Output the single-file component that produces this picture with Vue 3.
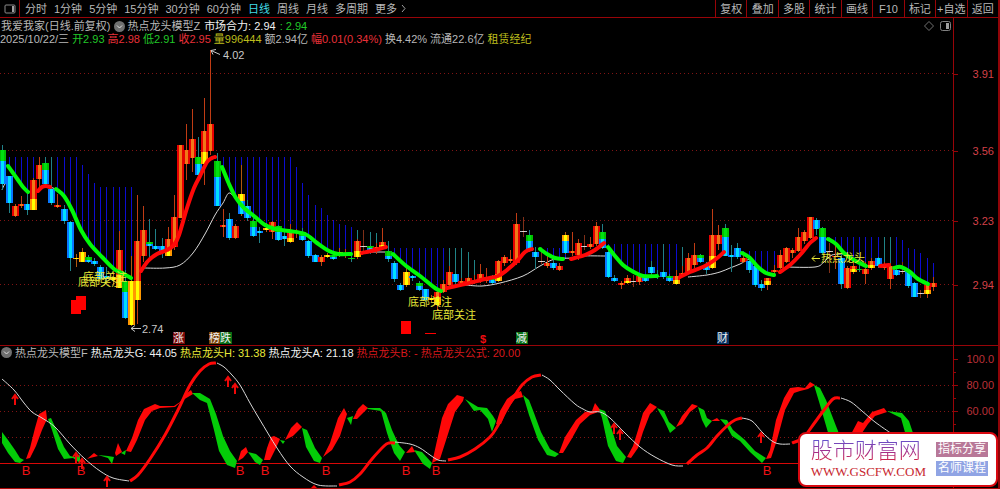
<script setup>
const periods = ['分时', '1分钟', '5分钟', '15分钟', '30分钟', '60分钟', '日线', '周线', '月线', '多周期', '更多']
const tools = ['复权', '叠加', '多股', '统计', '画线', 'F10', '标记', '+自选', '返回']

const quote = [
  { label: '2025/10/22/三', tone: 'plain' },
  { label: '开2.93', tone: 'down' },
  { label: '高2.98', tone: 'up' },
  { label: '低2.91', tone: 'down' },
  { label: '收2.95', tone: 'up' },
  { label: '量996444', tone: 'gold' },
  { label: '额2.94亿', tone: 'plain' },
  { label: '幅0.01(0.34%)', tone: 'up' },
  { label: '换4.42%', tone: 'plain' },
  { label: '流通22.6亿', tone: 'plain' },
  { label: '租赁经纪', tone: 'gold' },
]

const priceTicks = [
  { y: 74, label: '3.91' },
  { y: 151, label: '3.56' },
  { y: 221, label: '3.23' },
  { y: 285, label: '2.94' },
]
const indexTicks = [
  { y: 359, label: '100.0' },
  { y: 385, label: '80.00' },
  { y: 411, label: '60.00' },
  { y: 437, label: '40.00' },
]
const minorTicks = [372, 398, 424]
const priceTop = (y) => ({ top: ((y - 18) / 327) * 100 + '%' })
const indexTop = (y) => ({ top: ((y - 346) / 142) * 100 + '%' })

const step = 6.12
const xAt = (i) => Math.round(2.4 + step * i)

// high, top, bottom, low, upper colour, [split, lower colour]
const rows = [
  [145, 150, 184, 190, 'g', 161, 'c'], [176, 176, 203, 213, 'c'], [204, 206, 216, 217, 'r'], [196, 204, 206, 208, 'r'],
  [194, 204, 210, 215, 'c'], [178, 180, 210, 210, 'r', 199, 'y'], [157, 165, 179, 190, 'r'], [157, 163, 184, 186, 'g', 170, 'c'],
  [157, 189, 203, 205, 'c'], [194, 205, 207, 208, 'r'], [205, 209, 221, 224, 'c'], [221, 222, 258, 271, 'c'],
  [254, 258, 259, 267, 'y'], [248, 252, 262, 262, 'y'], [255, 257, 262, 263, 'g', 260, 'c'], [258, 261, 264, 266, 'c'],
  [265, 267, 279, 280, 'c'], [267, 276, 279, 281, 'c'], [272, 277, 280, 284, 'y'], [231, 250, 288, 288, 'r', 275, 'y'],
  [270, 281, 318, 319, 'g', 292, 'c'], [256, 281, 325, 326, 'y'], [195, 241, 300, 324, 'r', 281, 'y'], [206, 230, 256, 262, 'r'],
  [219, 242, 246, 259, 'g', 244, 'c'], [229, 246, 249, 250, 'c'], [238, 246, 253, 258, 'c'], [227, 239, 256, 256, 'r', 249, 'y'],
  [195, 217, 247, 250, 'r'], [145, 145, 218, 218, 'r'], [124, 150, 164, 180, 'r'], [109, 139, 158, 172, 'r'],
  [137, 157, 175, 177, 'g', 164, 'c'], [98, 131, 164, 185, 'r', 152, 'y'], [50, 124, 151, 155, 'r'], [153, 161, 206, 206, 'g', 177, 'c'],
  [209, 225, 227, 237, 'r'], [213, 219, 238, 240, 'c'], [224, 226, 238, 239, 'r'], [165, 194, 214, 216, 'y', 201, 'c'],
  [200, 206, 218, 221, 'c'], [218, 221, 236, 237, 'g', 227, 'c'], [227, 231, 233, 243, 'c'], [223, 228, 230, 232, 'y'],
  [221, 222, 232, 239, 'r'], [225, 226, 240, 241, 'g', 232, 'c'], [231, 236, 239, 246, 'c'], [224, 230, 242, 243, 'r', 238, 'y'],
  [229, 231, 233, 238, 'r'], [228, 232, 240, 241, 'g', 236, 'c'], [240, 241, 256, 258, 'c'], [254, 255, 262, 262, 'c'],
  [255, 257, 262, 266, 'r'], [253, 255, 257, 258, 'y'], [252, 255, 259, 260, 'g', 257, 'c'], [248, 252, 255, 257, 'y'],
  [249, 254, 255, 258, 'r'], [252, 258, 259, 262, 'g'], [239, 241, 257, 259, 'r', 251, 'y'], [230, 246, 247, 252, 'w'],
  [241, 246, 251, 254, 'g', 248, 'c'], [243, 247, 250, 254, 'r'], [228, 242, 247, 249, 'r', 245, 'y'], [241, 251, 259, 262, 'g', 256, 'c'],
  [261, 263, 279, 282, 'c'], [283, 285, 290, 291, 'c'], [266, 272, 285, 287, 'y'], [275, 276, 278, 281, 'c'],
  [281, 283, 290, 291, 'g', 286, 'c'], [289, 289, 300, 302, 'c'], [295, 298, 300, 302, 'y'], [289, 292, 305, 311, 'r', 297, 'y'],
  [280, 284, 292, 293, 'r'], [266, 272, 285, 286, 'r'], [270, 274, 282, 284, 'c'], [278, 281, 283, 285, 'r'],
  [277, 278, 282, 284, 'r'], [275, 280, 281, 284, 'r'], [264, 274, 281, 283, 'r'], [268, 277, 281, 283, 'r'],
  [275, 277, 283, 284, 'g', 280, 'c'], [260, 261, 281, 282, 'r', 274, 'y'], [255, 257, 263, 266, 'r'], [250, 259, 261, 263, 'r'],
  [213, 224, 263, 265, 'r'], [217, 231, 232, 237, 'w'], [230, 235, 251, 252, 'g', 241, 'c'], [247, 252, 257, 269, 'c'],
  [249, 261, 262, 264, 'w'], [255, 263, 266, 268, 'r'], [256, 263, 268, 270, 'c'], [263, 266, 270, 271, 'r'],
  [232, 235, 253, 254, 'y', 241, 'c'], [232, 251, 253, 256, 'r'], [239, 243, 255, 260, 'r'], [235, 246, 247, 250, 'w'],
  [237, 244, 247, 249, 'r'], [222, 226, 244, 246, 'r'], [224, 232, 248, 249, 'g', 239, 'c'], [250, 252, 277, 278, 'c'],
  [275, 278, 281, 282, 'c'], [281, 283, 285, 289, 'r'], [275, 278, 283, 284, 'r', 281, 'y'], [275, 281, 282, 287, 'w'],
  [274, 276, 282, 285, 'r'], [274, 277, 281, 282, 'c'], [261, 267, 273, 278, 'c'], [270, 276, 277, 279, 'g'],
  [244, 272, 277, 279, 'c'], [274, 276, 281, 282, 'g', 278, 'c'], [270, 276, 284, 285, 'r', 280, 'y'], [266, 273, 275, 277, 'r'],
  [253, 258, 272, 274, 'r'], [243, 255, 265, 268, 'r'], [254, 255, 262, 263, 'g', 258, 'c'], [262, 266, 270, 274, 'c'],
  [209, 235, 268, 269, 'r', 256, 'y'], [225, 235, 244, 250, 'r'], [224, 228, 256, 256, 'g', 237, 'c'], [245, 255, 257, 272, 'c'],
  [243, 248, 257, 259, 'c'], [254, 258, 262, 263, 'r'], [260, 261, 270, 273, 'c'], [265, 266, 285, 287, 'c'],
  [280, 284, 288, 291, 'c'], [278, 278, 285, 290, 'r', 281, 'y'], [265, 270, 272, 275, 'r'], [250, 255, 268, 269, 'r'],
  [247, 248, 262, 263, 'r'], [248, 250, 253, 258, 'r'], [228, 237, 251, 252, 'r'], [230, 232, 241, 244, 'r'],
  [217, 217, 238, 239, 'r'], [218, 220, 229, 235, 'c'], [227, 228, 253, 254, 'g', 237, 'c'], [243, 251, 252, 273, 'w'],
  [246, 256, 257, 269, 'r'], [254, 258, 284, 289, 'c'], [266, 268, 288, 289, 'r'], [262, 266, 272, 274, 'r', 269, 'y'],
  [261, 269, 270, 272, 'g'], [262, 269, 274, 284, 'r'], [258, 261, 268, 270, 'r', 265, 'y'], [257, 258, 266, 268, 'c'],
  [262, 266, 268, 270, 'r'], [263, 266, 279, 289, 'r'], [266, 270, 275, 276, 'c'], [262, 271, 272, 274, 'w'],
  [270, 271, 286, 288, 'c'], [282, 283, 297, 297, 'c'], [290, 293, 294, 298, 'w'], [283, 285, 294, 298, 'r', 290, 'y'],
  [277, 283, 287, 291, 'r'],
]

const outer = { r: '#e80000', c: '#0878ff', g: '#00c000', y: '#ff9800', w: '#c0c0c0' }
const inner = { r: '#f07818', c: '#00e0ff', g: '#00e010', y: '#ffff00', w: '#d8d8d8' }
const wick = { r: '#c03c14', c: '#208088', g: '#208088', y: '#b05810', w: '#803018' }

const candles = rows.map(([high, top, bottom, low, tone, split, lower], i) => {
  const parts = split
    ? [{ y: top, h: split - top, tone }, { y: split, h: bottom - split, tone: lower }]
    : [{ y: top, h: bottom - top, tone }]
  return { x: xAt(i), high, low, tone, parts }
})

const trend = [
  { tone: 'fall', pts: [[8, 166], [13, 173], [18, 180], [23, 187], [28, 192]] },
  { tone: 'rise', pts: [[38, 191], [42, 187], [46, 186], [50, 187]] },
  { tone: 'fall', pts: [[56, 189], [64, 196], [72, 210], [81, 230], [90, 244], [102, 257], [114, 269], [124, 274], [131, 278]] },
  { tone: 'rise', pts: [[141, 271], [148, 261], [157, 254], [167, 250], [174, 245], [179, 235], [187, 208], [194, 188], [200, 176], [207, 162], [212, 158], [215, 157]] },
  { tone: 'fall', pts: [[222, 167], [229, 184], [236, 198], [244, 208], [254, 216], [265, 225], [275, 229], [289, 231], [305, 234], [317, 243], [329, 251], [338, 254], [351, 254]] },
  { tone: 'rise', pts: [[362, 253], [375, 250], [386, 247]] },
  { tone: 'fall', pts: [[393, 254], [405, 265], [420, 276], [435, 288], [441, 291]] },
  { tone: 'rise', pts: [[447, 288], [465, 284], [485, 279], [498, 276], [507, 270], [517, 261], [525, 252], [532, 249]] },
  { tone: 'fall', pts: [[540, 249], [547, 254], [555, 258], [563, 259]] },
  { tone: 'rise', pts: [[571, 259], [585, 255], [595, 250], [604, 243]] },
  { tone: 'fall', pts: [[608, 247], [615, 256], [623, 265], [632, 271], [643, 276], [657, 276]] },
  { tone: 'rise', pts: [[680, 277], [690, 272], [705, 266], [716, 259], [724, 252]] },
  { tone: 'fall', pts: [[742, 253], [750, 258], [758, 267], [766, 273], [774, 275]] },
  { tone: 'rise', pts: [[780, 272], [790, 265], [800, 255], [810, 243], [816, 238]] },
  { tone: 'fall', pts: [[828, 239], [836, 244], [844, 253], [854, 260], [866, 266]] },
  { tone: 'rise', pts: [[880, 266], [889, 265]] },
  { tone: 'fall', pts: [[894, 268], [901, 267], [910, 272], [918, 279], [928, 284]] },
]
const whites = [
  [[2, 190], [5, 184], [13, 177]], [[28, 192], [33, 191], [38, 190]], [[50, 187], [56, 189]],
  [[144, 268], [165, 268], [180, 265], [193, 253], [205, 234], [215, 215], [223, 203], [229, 193], [236, 199]],
  [[366, 252], [392, 252]],
  [[466, 285], [482, 286], [500, 283], [523, 276], [540, 266], [555, 259], [573, 258], [582, 256], [605, 256]],
  [[688, 277], [707, 275], [720, 272], [730, 268], [740, 264], [749, 259]],
  [[785, 267], [815, 267], [824, 262], [832, 255], [845, 254]],
]

const flat = trend.flatMap((s) => s.pts)
const lineY = (x) => {
  const k = flat.findIndex((p) => p[0] >= x)
  if (k < 1) return flat[k < 0 ? flat.length - 1 : 0][1]
  const [a, b] = [flat[k - 1], flat[k]]
  return a[1] + ((b[1] - a[1]) * (x - a[0])) / (b[0] - a[0])
}

// first bar index, bar tops, indexes drawn in teal
const curtains = [
  [1, [...Array(12).fill(157), 165, 174, 183, 187, 187, 187, 187, 187, 187], [6, 7, 8]],
  [35, [...Array(13).fill(157), 167, 183, 195, 205, 208, 215, 220, 224, 225, 227, 230, 231, 232, 233], [58, 59, 60, 61]],
  [63, [...Array(13).fill(248), 252, 260, 265], [73, 74, 75, 76, 77, 78]],
  [88, [248, 248, 248, 248, 248], []],
  [99, Array(12).fill(244), [108]],
  [111, [247], [111]],
  [121, Array(6).fill(251), []],
  [135, [...Array(12).fill(237), 240, 248, 249, 253, 258, 263], [144, 145]],
]
const bars = curtains.flatMap(([first, tops, teal]) =>
  tops.map((top, k) => {
    const i = first + k
    return { x: xAt(i), top, bottom: Math.max(top, Math.round(lineY(xAt(i)))), teal: teal.includes(i) }
  }),
)

const smooth = (pts) => {
  let d = `M${pts[0]}`
  for (let i = 1; i < pts.length; i++) {
    const p0 = pts[i - 2] || pts[i - 1]
    const p1 = pts[i - 1]
    const p2 = pts[i]
    const p3 = pts[i + 1] || p2
    d += `C${p1[0] + (p2[0] - p0[0]) / 6} ${p1[1] + (p2[1] - p0[1]) / 6} ${p2[0] - (p3[0] - p1[0]) / 6} ${p2[1] - (p3[1] - p1[1]) / 6} ${p2}`
  }
  return d
}

const badges = [
  { x: 173, fill: '#780808', label: '涨' },
  { x: 209, fill: '#7a4208', label: '榜' },
  { x: 220, fill: '#086c14', label: '跌' },
  { x: 516, fill: '#087014', label: '减' },
  { x: 717, fill: '#083060', label: '财' },
]
const notes = [
  { x: 83, y: 281, label: '底部关注' },
  { x: 78, y: 286, label: '底部关注' },
  { x: 408, y: 306, label: '底部关注' },
  { x: 432, y: 319, label: '底部关注' },
]

const ribbons = [
  ['fall', '2,432 8,440 15,450 20,458 24,460 20,463 15,462 8,453 2,443'],
  ['rise', '26,459 30,448 35,428 39,414 46,410 47,419 42,430 36,446 30,458'],
  ['fall', '48,419 51,418 57,431 64,447 70,456 75,457 80,455 80,463 73,458 64,459 58,449 52,430'],
  ['rise', '87,459 94,453 98,456 90,458'],
  ['fall', '98,455 108,456 114,457 112,464 108,458'],
  ['rise', '115,453 118,443 122,452 116,456'],
  ['fall', '121,453 126,450 125,455'],
  ['rise', '126,451 132,438 138,420 144,409 155,404 160,406 174,406 180,402 187,393 191,390 193,394 183,400 175,407 160,408 152,411 145,420 137,440 131,452'],
  ['fall', '192,393 200,393 210,399 216,414 223,436 230,451 237,461 235,468 227,465 219,451 214,430 207,403 200,400'],
  ['rise', '238,461 241,451 246,447 248,452 243,458'],
  ['fall', '248,452 256,454 263,460 260,465 255,462'],
  ['rise', '264,460 267,448 271,437 274,436 280,439 276,448 270,460'],
  ['fall', '280,440 285,441 283,444'],
  ['rise', '285,440 291,428 297,422 302,427 293,436'],
  ['fall', '302,428 307,430 315,448 322,458 320,463 314,461 306,447'],
  ['rise', '323,457 330,443 338,418 344,408 347,414 340,436 332,450'],
  ['fall', '347,418 353,416 351,425'],
  ['rise', '353,419 358,409 363,404 368,408 357,419'],
  ['fall', '367,408 380,408 386,413 392,430 399,445 405,452 400,461 394,453 387,433 381,411 368,409'],
  ['rise', '406,453 412,446 415,452'],
  ['fall', '414,450 422,452 432,463 430,469 423,464'],
  ['rise', '432,463 436,445 442,418 448,404 457,395 464,397 463,401 455,412 448,434 440,459'],
  ['fall', '465,399 478,407 487,408 493,416 496,421 492,432 488,419 480,410 474,411 469,404'],
  ['rise', '496,424 500,411 507,399 515,393 521,391 523,397 515,399 508,408 501,424'],
  ['fall', '523,395 529,400 534,413 541,432 550,449 559,454 555,457 547,455 538,440 529,415'],
  ['rise', '559,453 565,437 576,420 585,412 592,411 595,403 601,411 590,415 580,424 571,440 563,453'],
  ['fall', '599,409 605,411 611,427 617,446 626,457 623,463 616,461 608,446 602,418'],
  ['rise', '627,457 633,446 638,430 643,413 650,403 657,407 650,414 643,432 638,448 631,458'],
  ['fall', '657,408 664,411 669,422 676,428 670,433 664,420'],
  ['rise', '676,427 682,416 692,404 698,406 690,412 682,424'],
  ['fall', '698,407 704,410 707,418 712,421 706,428 702,420'],
  ['rise', '711,421 717,418 720,421'],
  ['fall', '720,419 727,420 733,430 745,440 755,451 766,458 762,463 750,452 740,441 732,436 727,427'],
  ['rise', '766,459 770,450 776,420 784,398 790,388 798,387 805,388 810,382 815,385 808,389 800,391 794,393 785,410 777,440 771,458'],
  ['fall', '814,385 820,388 826,400 836,426 840,436 829,436 820,405'],
  ['rise', '850,436 858,421 863,423 872,412 884,408 887,412 875,416 868,424 860,436'],
  ['fall', '887,411 902,413 909,421 914,436 906,436 901,418'],
]
const slow = [
  ['thin', [[2, 379], [14, 390], [24, 403], [32, 412], [42, 418], [55, 427], [70, 444], [85, 459], [100, 471], [113, 478], [129, 481]]],
  ['rise', [[130, 481], [138, 475], [150, 459], [165, 435], [178, 410], [190, 385], [200, 371], [209, 364], [216, 363]]],
  ['thin', [[217, 363], [224, 367], [232, 375], [240, 385], [250, 403], [260, 420], [277, 448], [290, 466], [303, 477], [318, 485], [337, 486]]],
  ['rise', [[339, 485], [350, 482], [360, 474], [372, 459], [384, 446], [389, 443], [395, 443]]],
  ['thin', [[395, 442], [410, 444], [420, 448], [430, 455], [438, 460], [446, 461]]],
  ['rise', [[448, 460], [460, 457], [475, 449], [490, 437], [497, 427], [505, 412], [514, 397], [522, 385], [532, 377], [541, 375]]],
  ['thin', [[542, 375], [550, 380], [560, 390], [575, 404], [583, 409], [590, 412], [600, 412], [610, 418], [625, 433], [640, 447], [655, 457], [672, 465], [683, 466]]],
  ['rise', [[687, 464], [697, 455], [707, 448], [717, 436], [728, 425], [735, 420], [742, 418]]],
  ['thin', [[742, 418], [752, 421], [762, 432], [772, 441], [780, 444], [790, 444]]],
  ['rise', [[792, 443], [803, 438], [813, 425], [824, 410], [833, 399], [840, 398]]],
  ['thin', [[841, 398], [851, 402], [862, 411], [875, 422], [892, 434]]],
]
const arrows = [[15, 395], [76, 453], [82, 459], [107, 477], [228, 377], [235, 384], [614, 424], [620, 430], [761, 433]]
const buys = [26, 81, 240, 265, 326, 406, 436, 767]
</script>

<template>
  <main class="page">
    <header class="toolbar">
      <button class="panel-toggle" aria-label="侧栏">
        <svg width="12" height="10" viewBox="0 0 12 10"><rect x="1" y="1" width="10" height="8" rx="1" fill="none" stroke="#8c8c8c" /><path d="M8 2h2v6H8z" fill="#a0a0a0" /></svg>
      </button>
      <nav class="periods">
        <button v-for="p in periods" :key="p" :class="{ active: p === '日线' }">{{ p }}</button>
        <svg class="chevron" width="5" height="9" viewBox="0 0 5 9"><path d="M1 1l3 3.500l-3 3.500" fill="none" stroke="#a0a0a0" /></svg>
      </nav>
      <div class="tools">
        <button v-for="t in tools" :key="t">{{ t }}</button>
      </div>
    </header>

    <section class="panel main">
      <div class="info">
        <div class="line">
          <span>我爱我家(日线.前复权)</span>
          <svg class="round" width="11" height="11" viewBox="0 0 11 11"><circle cx="5.500" cy="5.500" r="5.500" fill="#707070" /><path d="M3 4.500l2.500 2.500L8 4.500" fill="none" stroke="#e0e0e0" /></svg>
          <span>热点龙头模型Z</span>
          <span class="white">市场合力: 2.94</span>
          <span class="down">: 2.94</span>
          <span class="corner">
            <svg width="10" height="10" viewBox="0 0 10 10"><path d="M5 .5L9.500 5L5 9.500L.5 5z" fill="none" stroke="#707070" /></svg>
            <svg width="11" height="10" viewBox="0 0 11 10"><rect x=".5" y=".5" width="10" height="9" rx="2" fill="none" stroke="#808080" /><path d="M6 2h3v6H6z" fill="#a0a0a0" /></svg>
          </span>
        </div>
        <div class="line quote">
          <span v-for="q in quote" :key="q.label" :class="q.tone">{{ q.label }}</span>
        </div>
      </div>
      <svg class="plot" viewBox="0 46 953 299">
        <g class="grid">
          <path v-for="t in priceTicks" :key="t.y" :d="`M0 ${t.y - 0.5}H953`" />
        </g>
        <g shape-rendering="crispEdges">
          <rect v-for="b in bars" :key="b.x" :x="b.x" :y="b.top" width="1" :height="b.bottom - b.top" :fill="b.teal ? '#208488' : '#0c0cd0'" />
        </g>
        <path v-for="(w, i) in whites" :key="'w' + i" class="thin" :d="smooth(w)" />
        <g shape-rendering="crispEdges">
          <g v-for="c in candles" :key="c.x">
            <rect :x="c.x" :y="c.high" width="1" :height="c.low - c.high" :fill="wick[c.tone]" />
            <template v-for="p in c.parts" :key="p.y">
              <rect :x="c.x - 3" :y="p.y" width="7" :height="p.h" :fill="outer[p.tone]" />
              <rect :x="c.x - 1" :y="p.y" width="3" :height="p.h" :fill="inner[p.tone]" />
            </template>
          </g>
        </g>
        <path v-for="(s, i) in trend" :key="'t' + i" class="thick" :class="s.tone" :d="smooth(s.pts)" />
        <g fill="#f00">
          <path d="M76 296h10v14h-5v4H71v-14h5z" />
          <rect x="401" y="321" width="10" height="13" />
          <rect x="425" y="333" width="11" height="1" />
        </g>
        <g class="note">
          <text v-for="n in notes" :key="n.x" :x="n.x" :y="n.y">{{ n.label }}</text>
          <text x="821" y="262">热点龙头</text>
          <path d="M820 258.500h-8m3-3l-3 3l3 3" />
        </g>
        <g class="extreme">
          <path d="M220 54.500l-9-4m5-1l-5 1l2 4M141 328.500h-10m4-3l-4 3l4 3" />
          <text x="223" y="59">4.02</text>
          <text x="142" y="333">2.74</text>
        </g>
        <g class="badge">
          <template v-for="b in badges" :key="b.x">
            <rect :x="b.x" y="332" width="12" height="12" :fill="b.fill" />
            <text :x="b.x" y="342">{{ b.label }}</text>
          </template>
          <text x="480" y="343" class="dollar">$</text>
        </g>
      </svg>
      <div class="axis">
        <span v-for="t in priceTicks" :key="t.y" :style="priceTop(t.y)">{{ t.label }}</span>
      </div>
    </section>

    <section class="panel sub">
      <div class="info">
        <div class="line">
          <svg class="round" width="11" height="11" viewBox="0 0 11 11"><circle cx="5.500" cy="5.500" r="5.500" fill="#707070" /><path d="M3 4.500l2.500 2.500L8 4.500" fill="none" stroke="#e0e0e0" /></svg>
          <span>热点龙头模型F</span>
          <span class="white">热点龙头G: 44.05</span>
          <span class="yellow">热点龙头H: 31.38</span>
          <span class="white">热点龙头A: 21.18</span>
          <span class="deep">热点龙头B: -</span>
          <span class="deep">热点龙头公式: 20.00</span>
        </div>
      </div>
      <svg class="plot" viewBox="0 359 953 129">
        <g class="grid">
          <path d="M0 385.500H953M0 411.500H953M0 437.500H953" />
        </g>
        <path d="M0 463.500H953" stroke="#d80808" />
        <polygon v-for="([tone, pts], i) in ribbons" :key="i" :points="pts" :class="tone" class="ribbon" />
        <path v-for="([tone, pts], i) in slow" :key="'s' + i" :class="tone === 'thin' ? 'thin' : 'mid rise'" :d="smooth(pts)" />
        <path v-for="([x, y], i) in arrows" :key="'a' + i" class="arrow" :d="`M${x} ${y}v10M${x - 3} ${y + 4}l3 -4l3 4`" />
        <path d="M311 488l3-3l3 3z" fill="#f00" />
        <g class="buy">
          <text v-for="x in buys" :key="x" :x="x" y="475">B</text>
        </g>
      </svg>
      <div class="axis">
        <span v-for="t in indexTicks" :key="t.y" :style="indexTop(t.y)">{{ t.label }}</span>
        <i v-for="y in minorTicks" :key="y" :style="indexTop(y)"></i>
      </div>
    </section>

    <aside class="site">
      <div>
        <strong>股市财富网</strong>
        <a href="#">WWW.GSCFW.COM</a>
      </div>
      <div class="tags">
        <span class="pink">指标分享</span>
        <span class="blue">名师课程</span>
      </div>
    </aside>
  </main>
</template>

<style>
body {
  background: #000;
}
</style>

<style scoped>
.page {
  position: relative;
  border-right: 2px solid #900408;
  border-bottom: 1px solid #b00808;
  background: #000;
  color: #b8b8b8;
  font: 11px/14px "Liberation Sans", "Noto Sans CJK SC", sans-serif;
}
button {
  margin: 0;
  padding: 0;
  border: 0;
  background: none;
  color: inherit;
  font: inherit;
  white-space: nowrap;
}
.toolbar {
  display: flex;
  height: 17px;
  border-bottom: 1px solid #980408;
}
.panel-toggle {
  display: flex;
  align-items: center;
  justify-content: center;
  width: 20px;
  border-right: 1px solid #980408;
}
.periods {
  display: flex;
  align-items: center;
  gap: 7px;
  padding-left: 5px;
}
.chevron {
  margin-left: -3px;
}
.active {
  color: #40dce8;
}
.tools {
  display: grid;
  grid-template-columns: repeat(9, 1fr);
  width: 283px;
  margin-left: auto;
}
.tools button {
  border-left: 1px solid #980408;
}
.panel {
  display: grid;
  grid-template-columns: minmax(0, 1fr) 44px;
}
.sub {
  border-top: 1px solid #980408;
}
.info {
  min-width: 0;
  border-right: 1px solid #980408;
}
.main .info {
  padding: 1px 0;
}
.line {
  display: flex;
  align-items: center;
  gap: 4px;
  height: 14px;
  padding-left: 1px;
  white-space: nowrap;
}
.quote {
  gap: 3px;
  height: 12px;
  padding-left: 0;
}
.sub .line {
  gap: 3px;
  height: 13px;
}
.round + span {
  margin-left: -2px;
}
.sub .round + span {
  margin-left: 0;
}
.corner {
  display: flex;
  gap: 6px;
  margin-left: auto;
  padding-right: 2px;
}
.white {
  color: #f0f0f0;
}
.yellow {
  color: #e8e838;
}
.gold {
  color: #bcbc1c;
}
.up {
  color: #e83038;
}
.down {
  color: #20c828;
}
.deep {
  color: #d8181c;
}
.plot {
  grid-column: 1;
  display: block;
  width: calc(100% - 1px);
  min-width: 0;
  border-right: 1px solid #980408;
}
.axis {
  grid-column: 2;
  grid-row: 1 / 3;
  position: relative;
  color: #d44048;
}
.axis span {
  position: absolute;
  right: 4px;
  left: 0;
  text-align: right;
  transform: translateY(-50%);
}
.axis span::before,
.axis i {
  content: "";
  position: absolute;
  top: 50%;
  left: 0;
  width: 4px;
  height: 1px;
  background: #980408;
}
.axis i {
  width: 2px;
}
.sub .axis {
  color: #bc3038;
}
.grid path {
  stroke: #801414;
  stroke-dasharray: 1 3;
}
.thin {
  fill: none;
  stroke: #d8d8d8;
}
.thick {
  fill: none;
  stroke-width: 4;
  stroke-linecap: round;
}
.mid {
  fill: none;
  stroke-width: 3;
}
.rise {
  stroke: #ff0808;
}
.thick.fall {
  stroke: #00fa08;
}
.ribbon {
  stroke: none;
}
.ribbon.rise {
  fill: #ff0808;
}
.ribbon.fall {
  fill: #04cc08;
}
.arrow {
  fill: none;
  stroke: #f00808;
  stroke-width: 2;
}
.note {
  fill: #e8e838;
}
.note path {
  fill: none;
  stroke: #e8e838;
}
.extreme {
  fill: #c8c8c8;
}
.extreme path {
  fill: none;
  stroke: #c8c8c8;
}
.badge {
  fill: #f0f0f0;
}
.dollar {
  fill: #f00c10;
  font-weight: bold;
}
.buy {
  fill: #f01014;
  font-size: 13px;
  text-anchor: middle;
}
.site {
  position: absolute;
  right: 0;
  bottom: 1px;
  display: flex;
  align-items: center;
  gap: 10px;
  padding: 4px 8px 5px 11px;
  border: 2px solid #d80810;
  border-radius: 8px;
  background: #fff;
}
.site strong {
  display: block;
  background: linear-gradient(#5858d8, #a03090 50%, #e02030);
  background-clip: text;
  color: transparent;
  font-size: 22px;
  font-weight: 300;
  line-height: 26px;
}
.site a {
  display: block;
  color: #c82830;
  font: 13px/16px "Liberation Serif", serif;
  text-decoration: none;
}
.tags {
  display: grid;
  gap: 4px;
}
.tags span {
  padding: 0 2px;
  color: #fff;
  font-size: 12px;
  line-height: 15px;
}
.pink {
  background: #b87898;
}
.blue {
  background: #90a4e4;
}
</style>
